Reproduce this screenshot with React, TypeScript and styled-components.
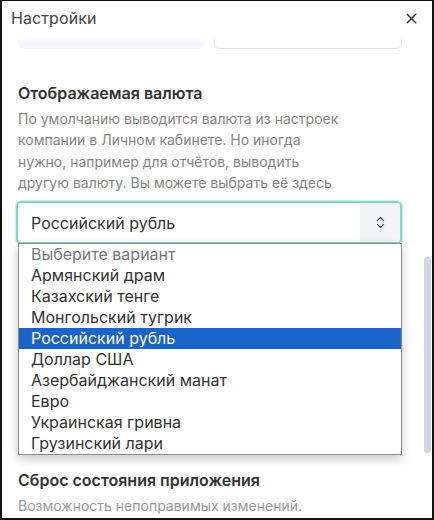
import styled, { createGlobalStyle } from "styled-components";
import { X, ChevronsUpDown } from "lucide-react";

const GlobalStyle = createGlobalStyle`
  html, body {
    margin: 0;
    padding: 0;
    background: #fff;
  }
  * {
    box-sizing: border-box;
  }
`;

const currencies = [
  "Армянский драм",
  "Казахский тенге",
  "Монгольский тугрик",
  "Российский рубль",
  "Доллар США",
  "Азербайджанский манат",
  "Евро",
  "Украинская гривна",
  "Грузинский лари",
];

const selected = "Российский рубль";

const Frame = styled.div`
  width: 434px;
  height: 520px;
  border: 2px solid #111;
  border-top-width: 1px;
  background: #fff;
  overflow: hidden;
  display: flex;
  flex-direction: column;
  font-family: Inter, "Noto Sans", sans-serif;
  color: #333;
`;

const Header = styled.div`
  position: relative;
  z-index: 2;
  height: 34px;
  flex: none;
  display: flex;
  align-items: center;
  justify-content: space-between;
  padding: 0 12px 0 9px;
  background: #fff;

  &::after {
    content: "";
    position: absolute;
    left: 0;
    right: 0;
    top: 100%;
    height: 8px;
    background: linear-gradient(#fff, rgba(255, 255, 255, 0));
  }
`;

const Title = styled.div`
  font-size: 16px;
  color: #444;
  letter-spacing: 0.1px;
`;

const CloseButton = styled.button`
  border: none;
  background: none;
  padding: 0;
  display: flex;
  color: #333;
  cursor: pointer;
`;

const Body = styled.div`
  position: relative;
  flex: 1;
  overflow: hidden;
`;

const Content = styled.div`
  position: relative;
  padding: 0 30px 0 14px;
  margin-top: -18px;
`;

const FieldRow = styled.div`
  display: flex;
  gap: 10px;
  padding-left: 2px;
`;

const GhostButton = styled.div`
  flex: 1;
  height: 32px;
  border-radius: 6px;
  background: #f5f6fa;
`;

const GhostInput = styled.div`
  flex: 1;
  height: 32px;
  border-radius: 5px;
  border: 1px solid #e6e7ea;
  background: #fff;
`;

const Section = styled.div<{ $top: number }>`
  margin-top: ${({ $top }) => $top}px;
  padding-left: 2px;
`;

const SectionTitle = styled.div`
  font-size: 16px;
  font-weight: 600;
  color: #333;
  line-height: 20px;
`;

const Description = styled.div`
  margin-top: 5px;
  font-size: 14px;
  line-height: 21.3px;
  color: #858585;
  width: 330px;
`;

const SelectWrap = styled.div`
  position: relative;
  margin-top: 8px;
  margin-left: -2px;
`;

const SelectBox = styled.div`
  height: 43px;
  border: 2px solid #80d8cb;
  border-radius: 5px;
  box-shadow: 0 0 0 1px rgba(128, 216, 203, 0.35);
  display: flex;
  align-items: stretch;
  overflow: hidden;
`;

const SelectValue = styled.div`
  flex: 1;
  display: flex;
  align-items: center;
  padding-left: 13px;
  font-size: 16px;
  color: #333;
`;

const SelectArrow = styled.div`
  width: 40px;
  display: flex;
  align-items: center;
  justify-content: center;
  background: #f2f3f5;
  color: #444;
`;

const OptionList = styled.div`
  position: absolute;
  z-index: 3;
  top: 42px;
  left: 2px;
  width: 384px;
  border: 1px solid #8c8c8c;
  background: #fff;
  box-shadow: 0 4px 10px rgba(0, 0, 0, 0.22);
`;

const Option = styled.div<{ $active?: boolean; $placeholder?: boolean }>`
  height: 21px;
  line-height: 21px;
  padding-left: 12px;
  font-size: 16px;
  white-space: nowrap;
  background: ${({ $active }) => ($active ? "#1b63c7" : "transparent")};
  color: ${({ $active, $placeholder }) =>
    $active ? "#fff" : $placeholder ? "#777" : "#333"};
`;

const ScrollThumb = styled.div`
  position: absolute;
  right: 1px;
  top: 222px;
  width: 7px;
  height: 196px;
  border-radius: 4px;
  background: #cfd7e4;
`;

const Muted = styled.div`
  margin-top: 6px;
  font-size: 14px;
  line-height: 20px;
  color: #9a9a9a;
`;

export default function App() {
  return (
    <>
      <GlobalStyle />
      <Frame>
        <Header>
          <Title>Настройки</Title>
          <CloseButton aria-label="Закрыть">
            <X size={17} strokeWidth={2} />
          </CloseButton>
        </Header>
        <Body>
          <Content>
            <FieldRow>
              <GhostButton />
              <GhostInput />
            </FieldRow>
            <Section $top={34}>
              <SectionTitle>Отображаемая валюта</SectionTitle>
              <Description>
                По умолчанию выводится валюта из настроек компании в Личном
                кабинете. Но иногда нужно, например для отчётов, выводить другую
                валюту. Вы можете выбрать её здесь
              </Description>
              <SelectWrap>
                <SelectBox>
                  <SelectValue>{selected}</SelectValue>
                  <SelectArrow>
                    <ChevronsUpDown size={15} strokeWidth={1.8} />
                  </SelectArrow>
                </SelectBox>
                <OptionList>
                  <Option $placeholder>Выберите вариант</Option>
                  {currencies.map((c) => (
                    <Option key={c} $active={c === selected}>
                      {c}
                    </Option>
                  ))}
                </OptionList>
              </SelectWrap>
            </Section>
            <Section $top={226}>
              <SectionTitle>Сброс состояния приложения</SectionTitle>
              <Muted>Возможность непоправимых изменений.</Muted>
            </Section>
          </Content>
          <ScrollThumb />
        </Body>
      </Frame>
    </>
  );
}
